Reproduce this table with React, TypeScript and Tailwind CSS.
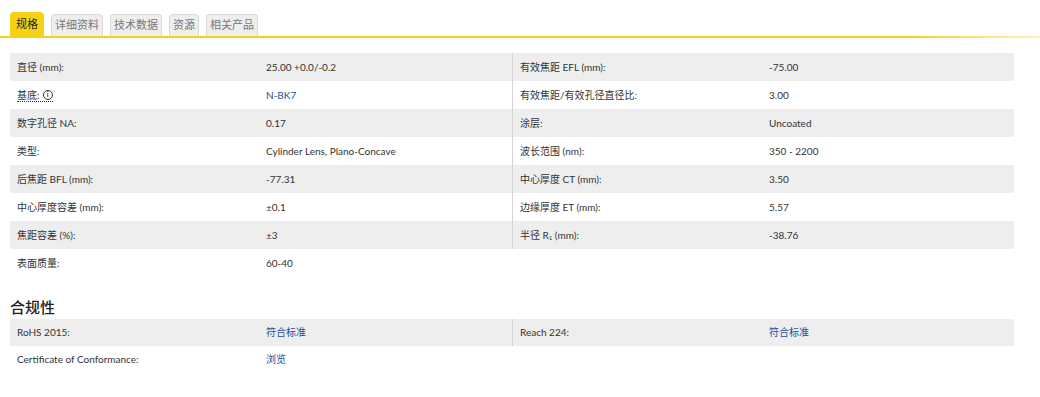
import React from "react";

const FONT = { fontFamily: '"Lato", "Noto Sans", "Noto Sans CJK SC", sans-serif' };

type Cell = { label: React.ReactNode; value: React.ReactNode };

const left: Cell[] = [
  { label: "直径 (mm):", value: "25.00 +0.0/-0.2" },
  {
    label: (
      <span className="inline-flex items-center gap-[3px] border-b border-dotted border-[#333] leading-[12px]">
        <span>基底:</span>
        <span className="inline-flex h-[10px] w-[10px] items-center justify-center rounded-full border-[1.5px] border-[#333] text-[7px] font-bold leading-none">i</span>
      </span>
    ),
    value: <span className="text-[#22509c]">N-BK7</span>,
  },
  { label: "数字孔径 NA:", value: "0.17" },
  { label: "类型:", value: "Cylinder Lens, Plano-Concave" },
  { label: "后焦距 BFL (mm):", value: "-77.31" },
  { label: "中心厚度容差 (mm):", value: "±0.1" },
  { label: "焦距容差 (%):", value: "±3" },
  { label: "表面质量:", value: "60-40" },
];

const right: Cell[] = [
  { label: "有效焦距 EFL (mm):", value: "-75.00" },
  { label: "有效焦距/有效孔径直径比:", value: "3.00" },
  { label: "涂层:", value: "Uncoated" },
  { label: "波长范围 (nm):", value: "350 - 2200" },
  { label: "中心厚度 CT (mm):", value: "3.50" },
  { label: "边缘厚度 ET (mm):", value: "5.57" },
  {
    label: (
      <span>
        半径 R<sub className="text-[6px]">1</sub> (mm):
      </span>
    ),
    value: "-38.76",
  },
];

function Row({ cell, i, divider, h = "h-[28px]" }: { cell: Cell; i: number; divider?: boolean; h?: string }) {
  return (
    <div className={`flex ${h} items-center ${i % 2 === 0 ? "bg-[#eeeeee]" : "bg-white"} ${divider ? "border-l border-[#d4d4d4]" : ""}`}>
      <div className={`${divider ? "w-[256px]" : "w-[256px]"} pl-[7px] text-[#333]`}>{cell.label}</div>
      <div className="flex-1 text-[#333]">{cell.value}</div>
    </div>
  );
}

const tabs = ["规格", "详细资料", "技术数据", "资源", "相关产品"];

export default function App() {
  return (
    <div className="h-[397px] w-[1040px] bg-white text-[10px]" style={FONT}>
      <div className="flex items-end gap-[7px] px-[10px] pt-[12px]">
        {tabs.map((t, i) => (
          <div
            key={t}
            className={
              i === 0
                ? "flex h-[24px] items-center rounded-t-[4px] bg-[#f7d117] px-[6px] text-[11px] text-[#222]"
                : "flex h-[22px] items-center rounded-t-[4px] border border-b-0 border-[#d9d9d9] bg-[#eeeeee] px-[3px] text-[11px] text-[#777]"
            }
          >
            {t}
          </div>
        ))}
      </div>
      <div className="h-[2px] w-full bg-gradient-to-r from-[#f7d117] from-[88%] to-[#fdf3b8]" />

      <div className="mx-[10px] mt-[15px] flex w-[1004px]">
        <div className="w-[502px]">
          {left.map((c, i) => (
            <Row key={i} cell={c} i={i} />
          ))}
        </div>
        <div className="w-[502px]">
          {right.map((c, i) => (
            <Row key={i} cell={c} i={i} divider />
          ))}
        </div>
      </div>

      <div className="mx-[10px] mt-[20px] text-[15px] font-medium leading-[20px] text-[#222]">合规性</div>
      <div className="mx-[10px] mt-[2px] flex w-[1004px]">
        <div className="w-[502px]">
          <Row cell={{ label: "RoHS 2015:", value: <span className="text-[#22509c]">符合标准</span> }} i={0} h="h-[27px]" />
          <Row cell={{ label: "Certificate of Conformance:", value: <span className="text-[#22509c]">浏览</span> }} i={1} h="h-[27px]" />
        </div>
        <div className="w-[502px]">
          <Row cell={{ label: "Reach 224:", value: <span className="text-[#22509c]">符合标准</span> }} i={0} divider h="h-[27px]" />
        </div>
      </div>
    </div>
  );
}
